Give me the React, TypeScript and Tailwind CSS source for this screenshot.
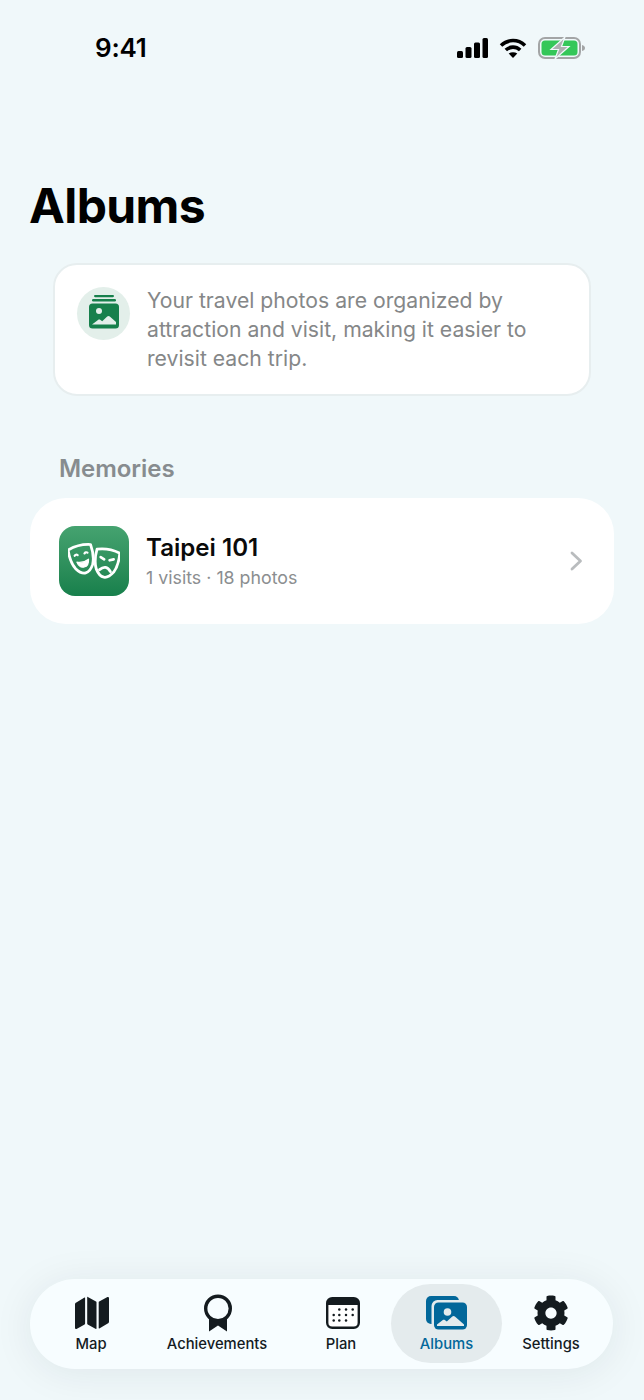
import React from "react";
import { FaCog } from "react-icons/fa";

const MapIcon = () => (
    <svg width="36" height="34" viewBox="-1 0 36 34" fill="#141b1f">
        <path d="M1 8.500c0-.9.500-1.600 1.300-2L10.500 1.500c.4-.2.600 0 .6.400V27.500c0 .4-.2.700-.5.900L3 32.800C2 33.400 1 32.800 1 31.700V8.500z" />
        <path d="M13.200 1.200c0-.4.300-.5.600-.3l8.200 4.500c.3.200.5.400.5.800V32.500c0 .4-.3.600-.6.400l-8.200-4.500c-.3-.2-.5-.4-.5-.8V1.200z" />
        <path d="M24.700 6.300c0-.4.200-.6.500-.8L33 1.200c1-.6 2 0 2 1.100V25.500c0 .9-.5 1.600-1.300 2l-8.400 5c-.4.200-.6 0-.6-.4V6.300z" />
    </svg>
);

const RibbonIcon = () => (
    <svg width="32" height="38" viewBox="-2 0 32 38" fill="none">
        <path d="M6 22v15.500l9-6 9 6V22z" fill="#141b1f" />
        <circle cx="15" cy="14.500" r="12.300" fill="#f7fdff" stroke="#141b1f" strokeWidth="3.400" />
    </svg>
);

const CalendarIcon = () => {
    const dots = [
        [13.300, 12.500], [20, 12.500], [26.700, 12.500],
        [7.700, 18], [13.300, 18], [20, 18], [26.700, 18],
        [7.700, 23.500], [13.300, 23.500], [20, 23.500],
    ];
    return (
        <svg width="37" height="32" viewBox="-3 0 37 32">
            <rect x="1.200" y="1.200" width="31.600" height="29.600" rx="5" fill="#fff" stroke="#141b1f" strokeWidth="2.400" />
            <path d="M1 8V6a5 5 0 0 1 5-5h22a5 5 0 0 1 5 5v2z" fill="#141b1f" />
            {dots.map(([x, y]) => (
                <circle key={`${x}-${y}`} cx={x} cy={y} r="1.250" fill="#141b1f" />
            ))}
        </svg>
    );
};

const AlbumsTabIcon = () => (
    <svg width="44" height="36" viewBox="0 0 44 36">
        <rect x="1" y="1" width="33" height="28" rx="5" fill="#02679a" />
        <rect x="6.500" y="5" width="37.500" height="31" rx="6" fill="#e4ebed" />
        <rect x="9" y="7.500" width="33" height="27" rx="4.500" fill="#02679a" />
        <circle cx="22.500" cy="17" r="3.800" fill="#e4ebed" />
        <path d="M12 31v-1.500l5.500-4.300c.8-.6 1.800-.6 2.600 0l1.700 1.300 5.500-5c.8-.7 1.800-.7 2.600 0l9.100 8V31z" fill="#e4ebed" />
    </svg>
);

const PhotoStackIcon = () => (
    <svg width="32" height="34" viewBox="0 0 32 34">
        <rect x="6" y="0" width="20" height="2.200" rx="1.100" fill="#17804c" />
        <rect x="4" y="4" width="24" height="2.400" rx="1.200" fill="#17804c" />
        <rect x="1" y="8.500" width="30" height="25" rx="3.500" fill="#17804c" />
        <circle cx="11" cy="16" r="3" fill="#e3efea" />
        <path d="M4 29.500l6-4.500c.8-.6 1.800-.6 2.500 0l1.700 1.300 5-4.700c.8-.7 1.800-.7 2.600 0l6.200 5.400v2.500z" fill="#e3efea" />
    </svg>
);

const maskShape = "M-10.500 -10C-4 -12 4 -12 10.500 -10C11.200 -3 10.500 3 8 8C5.500 12 2 14 0 14C-2 14 -5.500 12 -8 8C-10.500 3 -11.200 -3 -10.500 -10Z";

const MasksIcon = () => (
    <svg width="52" height="38" viewBox="0 0 52 38" fill="none" stroke="#fff" strokeWidth="2.500" strokeLinecap="round" strokeLinejoin="round">
        <g transform="translate(14 16) rotate(-14) scale(1.100)">
            <path d={maskShape} />
            <path d="M-6 -3.500c.8-.9 2-.9 2.800 0M3.200 -3.500c.8-.9 2-.9 2.800 0" strokeWidth="2" />
            <path d="M-5.500 2.500Q0 5 5.500 2.500Q4.500 8.500 0 8.500Q-4.500 8.500 -5.500 2.500Z" fill="#fff" strokeWidth="1" />
        </g>
        <g transform="translate(38.500 20) rotate(10) scale(1.100)">
            <path d={maskShape} />
            <path d="M-6 -3.500l3.500 1.500M6 -3.500l-3.500 1.500" strokeWidth="2.400" />
            <path d="M-5 8Q0 2 5 8" strokeWidth="2.600" />
        </g>
    </svg>
);

const tabs = [
    { label: "Map", width: "w-[104px]", icon: <MapIcon /> },
    { label: "Achievements", width: "w-[148px]", icon: <RibbonIcon /> },
    { label: "Plan", width: "w-[100px]", icon: <CalendarIcon /> },
    { label: "Albums", width: "w-[111px]", icon: <AlbumsTabIcon />, active: true },
    { label: "Settings", width: "w-[98px]", icon: <FaCog size={36} color="#141b1f" /> },
];

export default function App() {
    return (
        <div className="flex h-[1400px] w-[644px] flex-col bg-[#f0f8fa] font-[Inter,sans-serif] text-black">
            {/* status bar */}
            <div className="flex items-center justify-between pl-[95px] pr-[59px] pt-[33px]">
                <span className="text-[26px] font-semibold leading-[30px] tracking-[-0.2px]">9:41</span>
                <div className="flex items-center gap-[11px]">
                    <svg width="32" height="20" viewBox="0 0 32 20" fill="#000">
                        <rect x="1" y="13" width="6" height="7" rx="1.500" />
                        <rect x="9.500" y="9" width="6" height="11" rx="1.500" />
                        <rect x="18" y="4.500" width="6" height="15.500" rx="1.500" />
                        <rect x="26.500" y="0" width="5.500" height="20" rx="1.500" />
                    </svg>
                    <svg width="28" height="20" viewBox="0 0 28 20" fill="none" stroke="#000" strokeWidth="3.600">
                        <path d="M2 7.500c7-6.600 17-6.600 24 0" />
                        <path d="M6.800 12c4.300-3.900 10.100-3.900 14.400 0" />
                        <path d="M14 20l-4.300-4.500c2.600-1.800 6-1.800 8.600 0z" fill="#000" stroke="none" />
                    </svg>
                    <svg width="47" height="22" viewBox="0 0 47 22">
                        <rect x="1" y="1" width="41" height="20" rx="6" fill="none" stroke="#a3a5a6" strokeWidth="2" />
                        <rect x="3.500" y="3.500" width="36" height="15" rx="3.500" fill="#34c759" />
                        <path d="M44 8c2 .5 3 1.500 3 3s-1 2.500-3 3z" fill="#a3a5a6" />
                        <path d="M27 0L13 12.500h7.500L17 22l14-12.500h-7.500z" fill="#aeb0b1" stroke="#f0f8fa" strokeWidth="1.200" />
                    </svg>
                </div>
            </div>

            <h1 className="mt-[114px] pl-[29px] text-[48px] font-bold leading-[58px] tracking-[-0.6px]">Albums</h1>

            {/* info card */}
            <section className="mx-[53px] mt-[28px] flex h-[133px] gap-[17px] rounded-[24px] border-2 border-[#e7eeef] bg-white pl-[22px] pt-[22px]">
                <div className="flex h-[53px] w-[53px] shrink-0 items-center justify-center rounded-full bg-[#e3efea]">
                    <div className="mb-1 flex">
                        <PhotoStackIcon />
                    </div>
                </div>
                <p className="-mt-[1px] w-[424px] text-[21.200px] leading-[29px] text-[#858788]">
                    Your travel photos are organized by attraction and visit, making it easier to revisit each trip.
                </p>
            </section>

            <h2 className="mt-[58px] pl-[59px] text-[24px] font-semibold leading-[30px] tracking-[-0.05px] text-[#878c8f]">Memories</h2>

            {/* memories */}
            <div className="mx-[30px] mt-[14px] flex h-[126px] items-center rounded-[36px] bg-white pl-[29px] pr-[31px]">
                <div className="flex h-[70px] w-[70px] items-center justify-center rounded-[16px] bg-gradient-to-b from-[#45a370] to-[#17804c]">
                    <MasksIcon />
                </div>
                <div className="ml-[17px] flex-1">
                    <div className="text-[24.100px] font-semibold leading-[30px] text-[#0a0a0a]">Taipei 101</div>
                    <div className="mt-[3px] text-[17.800px] leading-[24px] text-[#8b8e90]">1 visits · 18 photos</div>
                </div>
                <svg width="13" height="20" viewBox="0 0 13 20" fill="none" stroke="#b9bcbe" strokeWidth="2.800" strokeLinecap="round" strokeLinejoin="round">
                    <path d="M2 2l8.500 8L2 18" />
                </svg>
            </div>

            {/* tab bar */}
            <nav className="mx-[30px] mb-[31px] mt-auto flex h-[90px] w-[583px] items-start rounded-[45px] bg-[#f7fdff] pl-[9px] pt-[5px] shadow-[0_4px_40px_rgba(20,40,50,0.08)]">
                {tabs.map((tab) => (
                    <div
                        key={tab.label}
                        className={`flex h-[79px] shrink-0 flex-col items-center rounded-[40px] pt-[7px] ${tab.width} ${tab.active ? "bg-[#e4ebed] text-[#02679a]" : "text-[#141b1f]"}`}
                    >
                        <div className="flex h-[44px] items-center justify-center">{tab.icon}</div>
                        <span className="-mt-[1px] text-[14.800px] font-medium leading-[20px]">{tab.label}</span>
                    </div>
                ))}
            </nav>
        </div>
    );
}
